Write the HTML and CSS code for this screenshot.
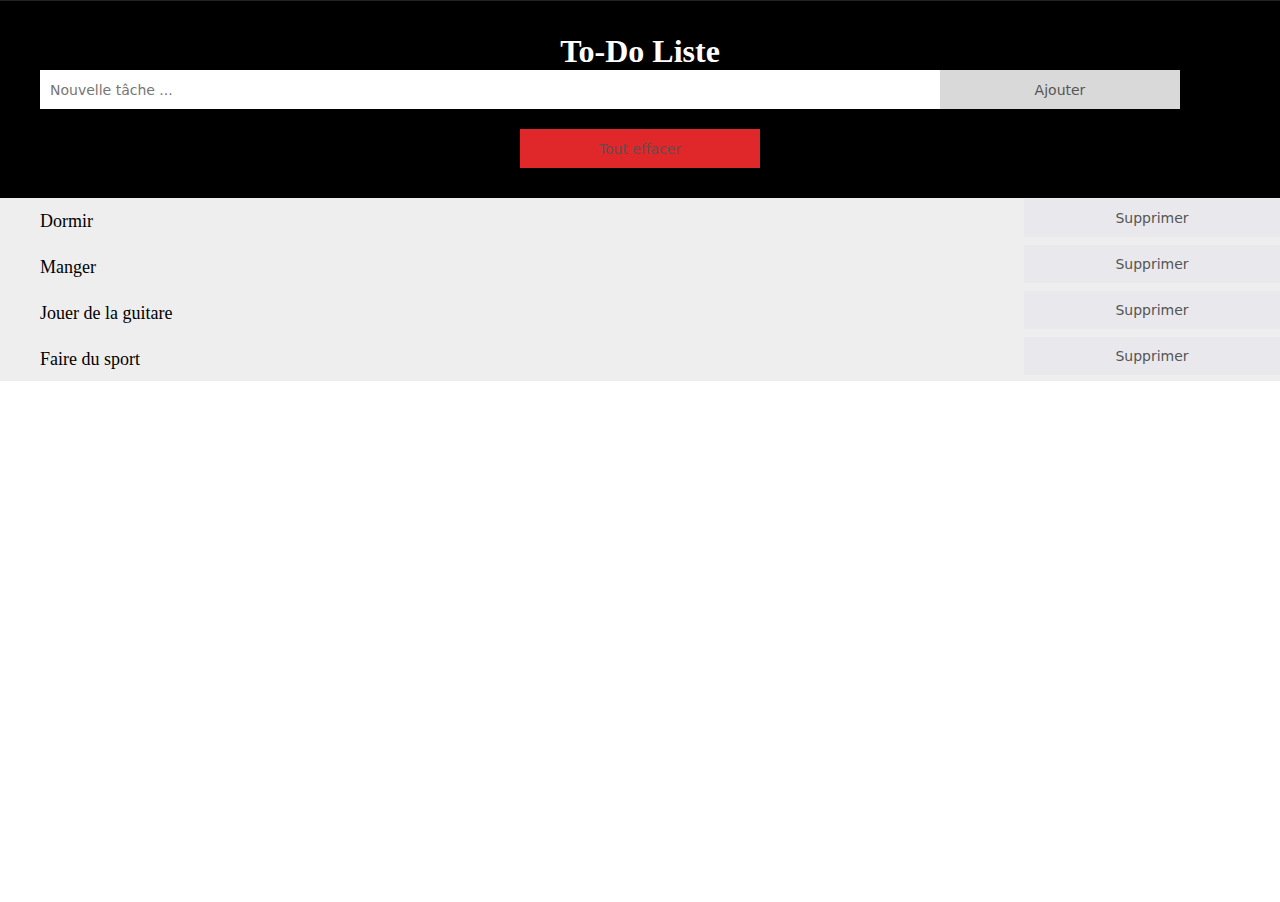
FILE: index.html
```html
<!DOCTYPE html>
<html lang="fr">
<head>
<meta charset="utf-8">
<title>To-Do Liste</title>
<link rel="stylesheet" href="styles.css">
</head>
<body>
<header class="top">
  <h1 class="title">To-Do Liste</h1>
  <form class="add-row" onsubmit="return false">
    <input class="task-input" type="text" placeholder="Nouvelle tâche ...">
    <button class="add-btn" type="button">Ajouter</button>
  </form>
  <div class="clear-row">
    <button class="clear-btn" type="button">Tout effacer</button>
  </div>
</header>
<ul class="list">
  <li class="item"><span class="item-text">Dormir</span><button class="del-btn" type="button">Supprimer</button></li>
  <li class="item"><span class="item-text">Manger</span><button class="del-btn" type="button">Supprimer</button></li>
  <li class="item"><span class="item-text">Jouer de la guitare</span><button class="del-btn" type="button">Supprimer</button></li>
  <li class="item"><span class="item-text">Faire du sport</span><button class="del-btn" type="button">Supprimer</button></li>
</ul>
</body>
</html>
```
FILE: styles.css
```css
html, body {
  margin: 0;
  padding: 0;
  background: #ffffff;
}
body {
  font-family: "Liberation Serif", "Times New Roman", serif;
}
.top {
  background: #000000;
  border-top: 1px solid #232323;
  padding: 32px 40px 30px;
  display: flex;
  flex-direction: column;
  align-items: center;
}
.title {
  margin: 0;
  color: #ffffff;
  font-size: 32px;
  line-height: 37px;
  font-weight: bold;
  text-align: center;
}
.add-row {
  margin: 0;
  display: flex;
  align-self: flex-start;
  width: 1140px;
  height: 39px;
}
.task-input {
  width: 900px;
  height: 39px;
  box-sizing: border-box;
  border: none;
  outline: none;
  padding: 0 10px;
  margin: 0;
  background: #ffffff;
  font-family: "DejaVu Sans", Tahoma, sans-serif;
  font-size: 14px;
  color: #333;
}
.task-input::placeholder {
  color: #767676;
}
.add-btn {
  width: 240px;
  height: 39px;
  border: none;
  margin: 0;
  background: #d9d9d9;
  color: #555555;
  font-family: "DejaVu Sans", Tahoma, sans-serif;
  font-size: 14px;
}
.clear-row {
  margin-top: 20px;
  display: flex;
  justify-content: center;
}
.clear-btn {
  width: 240px;
  height: 39px;
  border: none;
  margin: 0;
  background: #e0282a;
  color: #6a4a4a;
  font-family: "DejaVu Sans", Tahoma, sans-serif;
  font-size: 14px;
}
.list {
  list-style: none;
  margin: 0;
  padding: 1px 0 6px;
  background: #eeeeee;
  display: flex;
  flex-direction: column;
  gap: 8px;
}
.item {
  display: flex;
  justify-content: space-between;
  align-items: flex-start;
  height: 38px;
  padding-left: 40px;
}
.item-text {
  padding-top: 12px;
  font-size: 18px;
  line-height: 20px;
  color: #000000;
}
.del-btn {
  width: 256px;
  height: 38px;
  border: none;
  margin: 0;
  background: #e9e9ed;
  color: #555555;
  font-family: "DejaVu Sans", Tahoma, sans-serif;
  font-size: 14px;
}
```
